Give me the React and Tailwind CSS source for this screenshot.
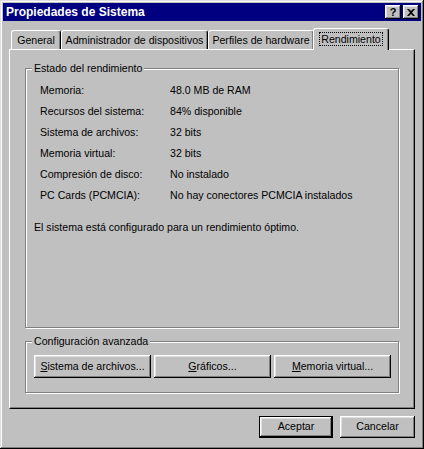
const bevel =
  'shadow-[inset_-1px_-1px_#000,inset_1px_1px_#fff,inset_-2px_-2px_#808080,inset_2px_2px_#dfdfdf]';

const rows = [
  ['Memoria:', '48.0 MB de RAM'],
  ['Recursos del sistema:', '84% disponible'],
  ['Sistema de archivos:', '32 bits'],
  ['Memoria virtual:', '32 bits'],
  ['Compresión de disco:', 'No instalado'],
  ['PC Cards (PCMCIA):', 'No hay conectores PCMCIA instalados'],
];

const Button = ({ children, className = '' }) => (
  <button
    className={`flex items-center justify-center bg-[#c0c0c0] text-black ${bevel} ${className}`}
  >
    {children}
  </button>
);

const GroupBox = ({ label, className = '', children }) => (
  <div
    className={`relative border border-[#808080] shadow-[inset_1px_1px_#fff,1px_1px_#fff] ${className}`}
  >
    <span className="absolute -top-[7px] left-[6px] px-[2px] bg-[#c0c0c0] leading-[13px]">
      {label}
    </span>
    {children}
  </div>
);

export default function App() {
  return (
    <div
      className="w-[424px] h-[449px] bg-[#c0c0c0] p-[3px] flex flex-col text-[10.6px] text-black font-['Liberation_Sans',Arial,sans-serif] shadow-[inset_-1px_-1px_#000,inset_1px_1px_#dfdfdf,inset_-2px_-2px_#808080,inset_2px_2px_#fff]"
    >
      {/* Title bar */}
      <div className="h-[18px] bg-[#000080] flex items-center justify-between pl-[3px] pr-[2px]">
        <span className="text-white font-bold text-[12px] leading-none">Propiedades de Sistema</span>
        <div className="flex gap-[2px]">
          <div
            className={`w-[16px] h-[14px] bg-[#c0c0c0] flex items-center justify-center font-bold text-[11px] leading-none ${bevel}`}
          >
            ?
          </div>
          <div
            className={`w-[16px] h-[14px] bg-[#c0c0c0] flex items-center justify-center ${bevel}`}
          >
            <svg width="8" height="7" viewBox="0 0 8 7">
              <path d="M0 0h2l2 2 2-2h2L5 3.5 8 7H6L4 5 2 7H0l3-3.5z" fill="#000" />
            </svg>
          </div>
        </div>
      </div>

      <div className="flex-1 flex flex-col px-[6px]">
        {/* Tabs */}
        <div className="relative z-10 mt-[6px] h-[22px] flex items-end pl-[2px]">
          {['General', 'Administrador de dispositivos', 'Perfiles de hardware'].map((t, i) => (
            <div
              key={t}
              className={`h-[19px] flex items-center justify-center pt-[1px] border-t border-l border-white border-r border-r-black rounded-t-[3px] shadow-[inset_-1px_0_#808080] ${
                i === 0 ? 'w-[50px]' : i === 1 ? 'w-[147px]' : 'w-[106px]'
              }`}
            >
              {t}
            </div>
          ))}
          <div className="-ml-[1px] w-[76px] h-[22px] -mb-[1px] bg-[#c0c0c0] flex items-start justify-center pt-[3px] border-t border-l border-white border-r border-r-black rounded-t-[3px] shadow-[inset_-1px_0_#808080]">
            <span className="border border-dotted border-black px-[1px] leading-[12px]">
              Rendimiento
            </span>
          </div>
        </div>

        {/* Panel */}
        <div className="h-[360px] flex flex-col border border-t-white border-l-white border-r-black border-b-black shadow-[inset_-1px_-1px_#808080] px-[15px]">
          <GroupBox label="Estado del rendimiento" className="mt-[18px] h-[260px]">
            <div className="pt-[11px] pl-[14px]">
              {rows.map(([k, v]) => (
                <div key={k} className="h-[21px] flex items-center">
                  <span className="w-[130px]">{k}</span>
                  <span>{v}</span>
                </div>
              ))}
            </div>
            <div className="mt-[15px] pl-[8px] leading-[13px]">
              El sistema está configurado para un rendimiento óptimo.
            </div>
          </GroupBox>

          <GroupBox label="Configuración avanzada" className="mt-[13px] h-[52px]">
            <div className="pt-[13px] pl-[8px] flex gap-[3px]">
              <Button className="w-[117px] h-[23px]">
                <span>
                  <u>S</u>istema de archivos...
                </span>
              </Button>
              <Button className="w-[117px] h-[23px]">
                <span>
                  <u>G</u>ráficos...
                </span>
              </Button>
              <Button className="w-[117px] h-[23px]">
                <span>
                  <u>M</u>emoria virtual...
                </span>
              </Button>
            </div>
          </GroupBox>
        </div>

        {/* Dialog buttons */}
        <div className="mt-[7px] flex justify-end gap-[7px]">
          <div className="border border-black">
            <Button className="w-[72px] h-[20px]">Aceptar</Button>
          </div>
          <Button className="w-[75px] h-[22px]">Cancelar</Button>
        </div>
      </div>
    </div>
  );
}
